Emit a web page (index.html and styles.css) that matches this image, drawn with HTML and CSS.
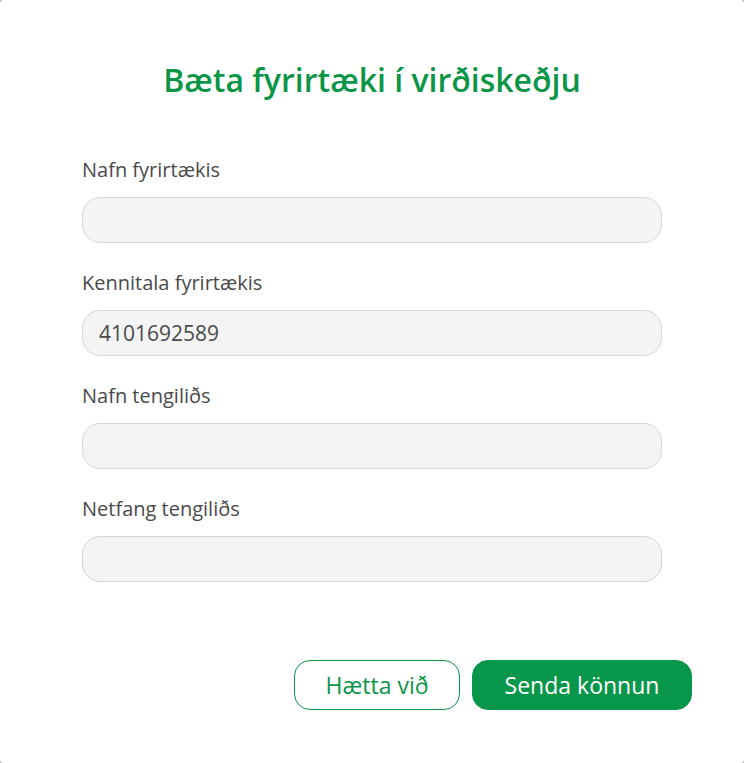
FILE: index.html
```html
<!DOCTYPE html>
<html lang="is">
<head>
<meta charset="utf-8">
<title>Bæta fyrirtæki í virðiskeðju</title>
<link rel="stylesheet" href="styles.css">
</head>
<body>
<div class="dialog">
  <h1 class="title">Bæta fyrirtæki í virðiskeðju</h1>
  <form class="form">
    <label class="field">
      <span class="label">Nafn fyrirtækis</span>
      <input class="input" type="text" value="">
    </label>
    <label class="field">
      <span class="label">Kennitala fyrirtækis</span>
      <input class="input" type="text" value="4101692589">
    </label>
    <label class="field">
      <span class="label">Nafn tengiliðs</span>
      <input class="input" type="text" value="">
    </label>
    <label class="field">
      <span class="label">Netfang tengiliðs</span>
      <input class="input" type="text" value="">
    </label>
  </form>
  <div class="actions">
    <button class="btn btn-outline" type="button">Hætta við</button>
    <button class="btn btn-primary" type="button">Senda könnun</button>
  </div>
</div>
</body>
</html>
```
FILE: styles.css
```css
html {
  background: #bdbdbd;
}
body {
  margin: 0;
  font-family: "Open Sans", "Noto Sans", sans-serif;
}
.dialog {
  box-sizing: border-box;
  height: 763px;
  background: #fff;
  border-radius: 4px;
  padding: 58px 52px 0 82px;
  display: flex;
  flex-direction: column;
}
.title {
  margin: 0 0 0 -30px;
  text-align: center;
  font-size: 32px;
  font-weight: 600;
  line-height: 44px;
  color: #0b9647;
}
.form {
  margin-top: 58px;
  width: 580px;
  display: flex;
  flex-direction: column;
  gap: 30px;
}
.field {
  display: flex;
  flex-direction: column;
  gap: 17px;
}
.label {
  font-size: 20px;
  font-weight: 500;
  line-height: 20px;
  color: #4a4a4a;
}
.input {
  box-sizing: border-box;
  height: 46px;
  width: 100%;
  margin: 0;
  padding: 0 16px;
  border: 1px solid #d6d6da;
  border-radius: 18px;
  background: #f4f4f5;
  font-family: inherit;
  font-size: 21px;
  color: #4a4a4a;
  outline: none;
}
.actions {
  margin-top: 78px;
  display: flex;
  justify-content: flex-end;
  gap: 12px;
}
.btn {
  box-sizing: border-box;
  height: 50px;
  border-radius: 16px;
  font-family: inherit;
  font-size: 23px;
  padding: 0;
  cursor: pointer;
}
.btn-outline {
  width: 166px;
  background: #fff;
  border: 1px solid #0b9647;
  color: #0b9647;
}
.btn-primary {
  width: 220px;
  background: #07964a;
  border: 1px solid #07964a;
  color: #fff;
}
```
